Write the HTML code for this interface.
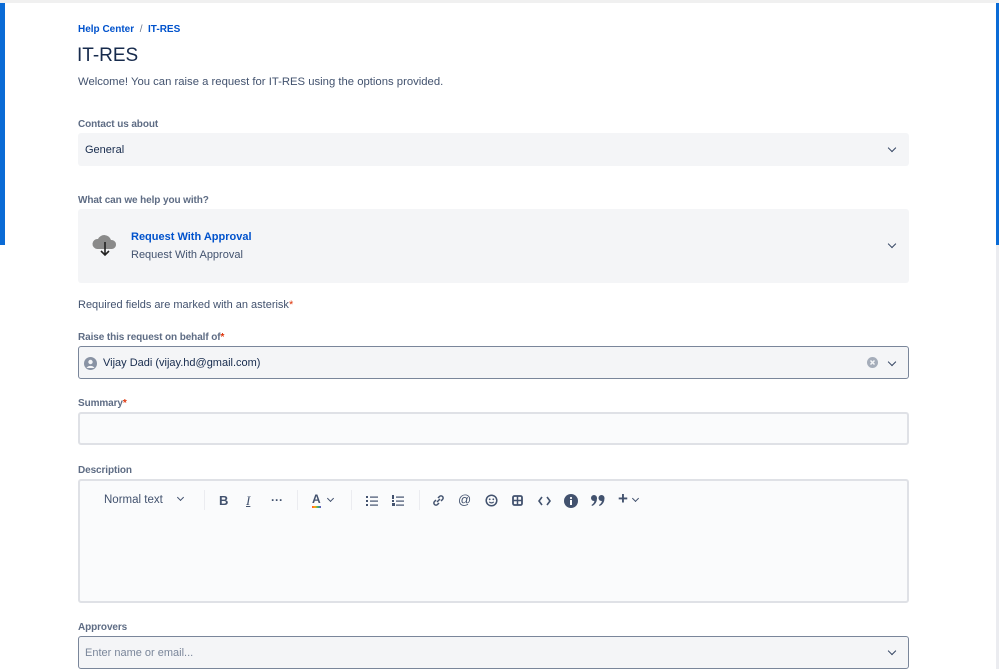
<!DOCTYPE html>
<html><head><meta charset="utf-8"><style>
*{box-sizing:border-box;margin:0;padding:0}
body{width:999px;height:669px;overflow:hidden;background:#fff;font-family:"Liberation Sans",sans-serif;position:relative;color:#172b4d}
.a{position:absolute}
.lbl{font-size:10px;color:#5e6c84;font-weight:bold;letter-spacing:-.1px}
.box{position:absolute;left:78px;width:831px;border-radius:3px;background:#f4f5f7}
.chev{position:absolute;width:6px;height:6px;border-right:1.8px solid #344563;border-bottom:1.8px solid #344563;transform:rotate(45deg)}
.star{color:#de350b}
.tb{position:absolute;top:494px;font-size:12px;color:#42526e}
.sep{position:absolute;top:490px;width:1px;height:20px;background:#ebecf0}
</style></head><body>
<div class="a" style="left:0;top:0;width:999px;height:3px;background:#f0f0f0"></div>
<div class="a" style="left:0;top:3px;width:5px;height:242px;background:#0a6bd6"></div>
<div class="a" style="left:996px;top:3px;width:3px;height:242px;background:#0a6bd6"></div>
<div class="a" style="left:996px;top:245px;width:3px;height:424px;background:#ebecf0"></div>

<div class="a" style="left:78px;top:24px;font-size:10px;color:#0052cc;font-weight:bold">Help Center &nbsp;<span style="color:#6b778c;font-weight:normal">/</span>&nbsp; IT-RES</div>
<div class="a" style="left:77px;top:45px;font-size:19px;color:#172b4d">IT-RES</div>
<div class="a" style="left:78px;top:76px;font-size:11.3px;color:#42526e">Welcome! You can raise a request for IT-RES using the options provided.</div>

<div class="a lbl" style="left:78px;top:119px">Contact us about</div>
<div class="box" style="top:133px;height:33px"></div>
<div class="a" style="left:85px;top:144px;font-size:11px;color:#172b4d">General</div>
<div class="chev" style="left:889px;top:145px"></div>

<div class="a lbl" style="left:78px;top:195px">What can we help you with?</div>
<div class="box" style="top:209px;height:74px"></div>
<svg class="a" style="left:91px;top:231px" width="28" height="26" viewBox="0 0 28 26"><path d="M6 18a5 5 0 0 1 1-10 7 7 0 0 1 13 1 4.5 4.5 0 0 1 1 9z" fill="#8a8a8a"/><path d="M14 11v13M10 20l4 4 4-4" stroke="#222" stroke-width="1.6" fill="none"/></svg>
<div class="a" style="left:131px;top:231px;font-size:11px;color:#0052cc;font-weight:bold">Request With Approval</div>
<div class="a" style="left:131px;top:249px;font-size:11px;color:#42526e">Request With Approval</div>
<div class="chev" style="left:889px;top:241px"></div>

<div class="a" style="left:78px;top:299px;font-size:11px;color:#42526e">Required fields are marked with an asterisk<span class="star">*</span></div>

<div class="a lbl" style="left:78px;top:332px">Raise this request on behalf of<span class="star">*</span></div>
<div class="box" style="top:346px;height:33px;border:1px solid #7a869a"></div>
<svg class="a" style="left:84px;top:357px" width="13" height="13" viewBox="0 0 13 13"><circle cx="6.5" cy="6.5" r="6.5" fill="#8993a4"/><circle cx="6.5" cy="5" r="2.2" fill="#f4f5f7"/><path d="M2.5 11a4.5 4 0 0 1 8 0z" fill="#f4f5f7"/></svg>
<div class="a" style="left:103px;top:357px;font-size:11px;color:#172b4d">Vijay Dadi (vijay.hd@gmail.com)</div>
<svg class="a" style="left:867px;top:357px" width="11" height="11" viewBox="0 0 11 11"><circle cx="5.5" cy="5.5" r="5.5" fill="#a5adba"/><path d="M3.5 3.5l4 4M7.5 3.5l-4 4" stroke="#f4f5f7" stroke-width="1.5"/></svg>
<div class="chev" style="left:889px;top:359px"></div>

<div class="a lbl" style="left:78px;top:398px">Summary<span class="star">*</span></div>
<div class="box" style="top:412px;height:33px;background:#fafbfc;border:2px solid #dfe1e6"></div>

<div class="a lbl" style="left:78px;top:465px">Description</div>
<div class="box" style="top:479px;height:124px;background:#fafbfc;border:2px solid #dfe1e6"></div>
<div class="tb" style="left:104px;font-size:11.5px">Normal text</div>
<div class="chev" style="left:178px;top:495px;width:5px;height:5px;border-color:#42526e"></div>
<div class="sep" style="left:204px"></div>
<div class="tb" style="left:219px;font-weight:bold;font-size:13px;top:493px;color:#42526e">B</div>
<div class="tb" style="left:246px;font-style:italic;font-size:13px;top:493px;font-family:'Liberation Serif',serif;text-decoration:underline;text-decoration-thickness:0">I</div>
<div class="tb" style="left:271px;font-weight:bold;top:493px">···</div>
<div class="sep" style="left:297px"></div>
<div class="tb" style="left:312px;font-weight:bold;font-size:12px;top:492px">A</div>
<div class="a" style="left:312px;top:506px;width:9px;height:2px;background:linear-gradient(90deg,#ff5630,#ffab00,#36b37e,#6554c0)"></div>
<div class="chev" style="left:328px;top:496px;width:5px;height:5px;border-color:#42526e"></div>
<div class="sep" style="left:351px"></div>
<svg class="a" style="left:366px;top:495px" width="12" height="11" viewBox="0 0 12 11"><g fill="#42526e"><rect x="0" y="1" width="2" height="2"/><rect x="0" y="5" width="2" height="2"/><rect x="0" y="9" width="2" height="2"/><rect x="4" y="1.5" width="8" height="1.2"/><rect x="4" y="5.5" width="8" height="1.2"/><rect x="4" y="9.5" width="8" height="1.2"/></g></svg>
<svg class="a" style="left:392px;top:495px" width="12" height="11" viewBox="0 0 12 11"><g fill="#42526e"><rect x="0" y="0" width="2" height="4"/><rect x="0" y="5" width="2" height="2"/><rect x="0" y="8" width="3" height="3"/><rect x="4" y="1.5" width="8" height="1.2"/><rect x="4" y="5.5" width="8" height="1.2"/><rect x="4" y="9.5" width="8" height="1.2"/></g></svg>
<div class="sep" style="left:419px"></div>
<svg class="a" style="left:432px;top:494px" width="13" height="13" viewBox="0 0 13 13"><path d="M5 8l3-3M4 6L2.5 7.5a2 2 0 0 0 3 3L7 9M6 4l1.5-1.5a2 2 0 0 1 3 3L9 7" stroke="#42526e" stroke-width="1.5" fill="none"/></svg>
<div class="tb" style="left:458px;font-size:13px;top:492px">@</div>
<svg class="a" style="left:485px;top:494px" width="13" height="13" viewBox="0 0 13 13"><circle cx="6.5" cy="6.5" r="5.3" stroke="#42526e" stroke-width="1.5" fill="none"/><circle cx="4.7" cy="5.3" r=".9" fill="#42526e"/><circle cx="8.3" cy="5.3" r=".9" fill="#42526e"/><path d="M4.3 7.8a2.5 2 0 0 0 4.4 0" stroke="#42526e" stroke-width="1.2" fill="none"/></svg>
<svg class="a" style="left:512px;top:495px" width="11" height="11" viewBox="0 0 11 11"><rect x="1" y="1" width="9" height="9" rx="1.5" stroke="#42526e" stroke-width="1.8" fill="none"/><path d="M5.5 1v9M1 5.5h9" stroke="#42526e" stroke-width="1.5"/></svg>
<svg class="a" style="left:538px;top:496px" width="13" height="10" viewBox="0 0 13 10"><path d="M4 1L1 5l3 4M9 1l3 4-3 4" stroke="#42526e" stroke-width="1.6" fill="none"/></svg>
<svg class="a" style="left:564px;top:494px" width="14" height="14" viewBox="0 0 14 14"><circle cx="7" cy="7" r="7" fill="#42526e"/><rect x="6" y="6" width="2" height="5" fill="#fff"/><circle cx="7" cy="4" r="1.1" fill="#fff"/></svg>
<svg class="a" style="left:591px;top:495px" width="14" height="11" viewBox="0 0 14 11"><g fill="#42526e"><circle cx="3" cy="3" r="3"/><path d="M6 3q0 6-5 8l-.5-1q3-2 3-5z"/><circle cx="10.5" cy="3" r="3"/><path d="M13.5 3q0 6-5 8l-.5-1q3-2 3-5z"/></g></svg>
<div class="tb" style="left:618px;font-size:17px;top:489px;font-weight:bold;line-height:20px">+</div>
<div class="chev" style="left:633px;top:496px;width:5px;height:5px;border-color:#42526e"></div>

<div class="a lbl" style="left:78px;top:622px">Approvers</div>
<div class="box" style="top:636px;height:33px;border:1px solid #7a869a"></div>
<div class="a" style="left:85px;top:647px;font-size:11px;color:#7a869a">Enter name or email...</div>
<div class="chev" style="left:889px;top:648px"></div>
</body></html>
